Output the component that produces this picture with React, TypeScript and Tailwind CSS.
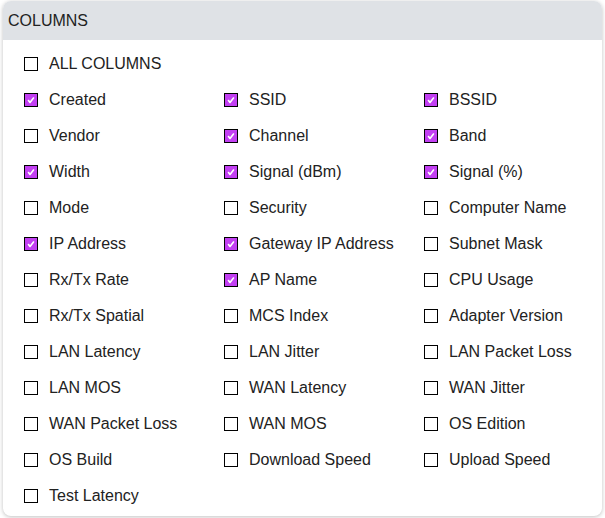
import { useState } from "react";

const initial: [string, boolean][] = [
  ["Created", true], ["SSID", true], ["BSSID", true],
  ["Vendor", false], ["Channel", true], ["Band", true],
  ["Width", true], ["Signal (dBm)", true], ["Signal (%)", true],
  ["Mode", false], ["Security", false], ["Computer Name", false],
  ["IP Address", true], ["Gateway IP Address", true], ["Subnet Mask", false],
  ["Rx/Tx Rate", false], ["AP Name", true], ["CPU Usage", false],
  ["Rx/Tx Spatial", false], ["MCS Index", false], ["Adapter Version", false],
  ["LAN Latency", false], ["LAN Jitter", false], ["LAN Packet Loss", false],
  ["LAN MOS", false], ["WAN Latency", false], ["WAN Jitter", false],
  ["WAN Packet Loss", false], ["WAN MOS", false], ["OS Edition", false],
  ["OS Build", false], ["Download Speed", false], ["Upload Speed", false],
  ["Test Latency", false],
];

function Box({ checked }: { checked: boolean }) {
  return (
    <span
      className={
        "flex h-[14px] w-[14px] shrink-0 items-center justify-center border border-black " +
        (checked ? "bg-[#c240f2]" : "bg-white")
      }
    >
      {checked && (
        <svg width="10" height="10" viewBox="0 0 10 10">
          <path d="M2.5 5.5 L4 7.5 L7.5 3" stroke="white" strokeWidth="1.6" fill="none" strokeLinecap="round" strokeLinejoin="round" />
        </svg>
      )}
    </span>
  );
}

export default function App() {
  const [cols, setCols] = useState(initial);
  const all = cols.every(([, c]) => c);

  const toggle = (i: number) =>
    setCols(cols.map((c, j) => (j === i ? [c[0], !c[1]] : c)));

  return (
    <div className="min-h-[518px] bg-white pt-px pl-[3px]" style={{ fontFamily: '"Liberation Sans", Arial, sans-serif' }}>
      <div className="w-[599px] overflow-hidden rounded-lg bg-white shadow-[0_1px_4px_rgba(0,0,0,0.25)]">
        {/* Header */}
        <div className="flex h-[39px] items-center bg-[#dfe2e6] px-[5px] text-[16px] text-[#222]">
          COLUMNS
        </div>

        <div className="pt-[6px] pb-[2px] pl-[21px]">
          <label
            className="flex h-[36px] cursor-pointer items-center gap-[11px] text-[16px] text-[#222]"
            onClick={() => setCols(cols.map(([n]) => [n, !all]))}
          >
            <Box checked={all} />
            ALL COLUMNS
          </label>

          <div className="grid grid-cols-[200px_200px_200px]">
            {cols.map(([name, checked], i) => (
              <label
                key={name}
                className="flex h-[36px] cursor-pointer items-center gap-[11px] text-[16px] text-[#222]"
                onClick={() => toggle(i)}
              >
                <Box checked={checked} />
                {name}
              </label>
            ))}
          </div>
        </div>
      </div>
    </div>
  );
}
